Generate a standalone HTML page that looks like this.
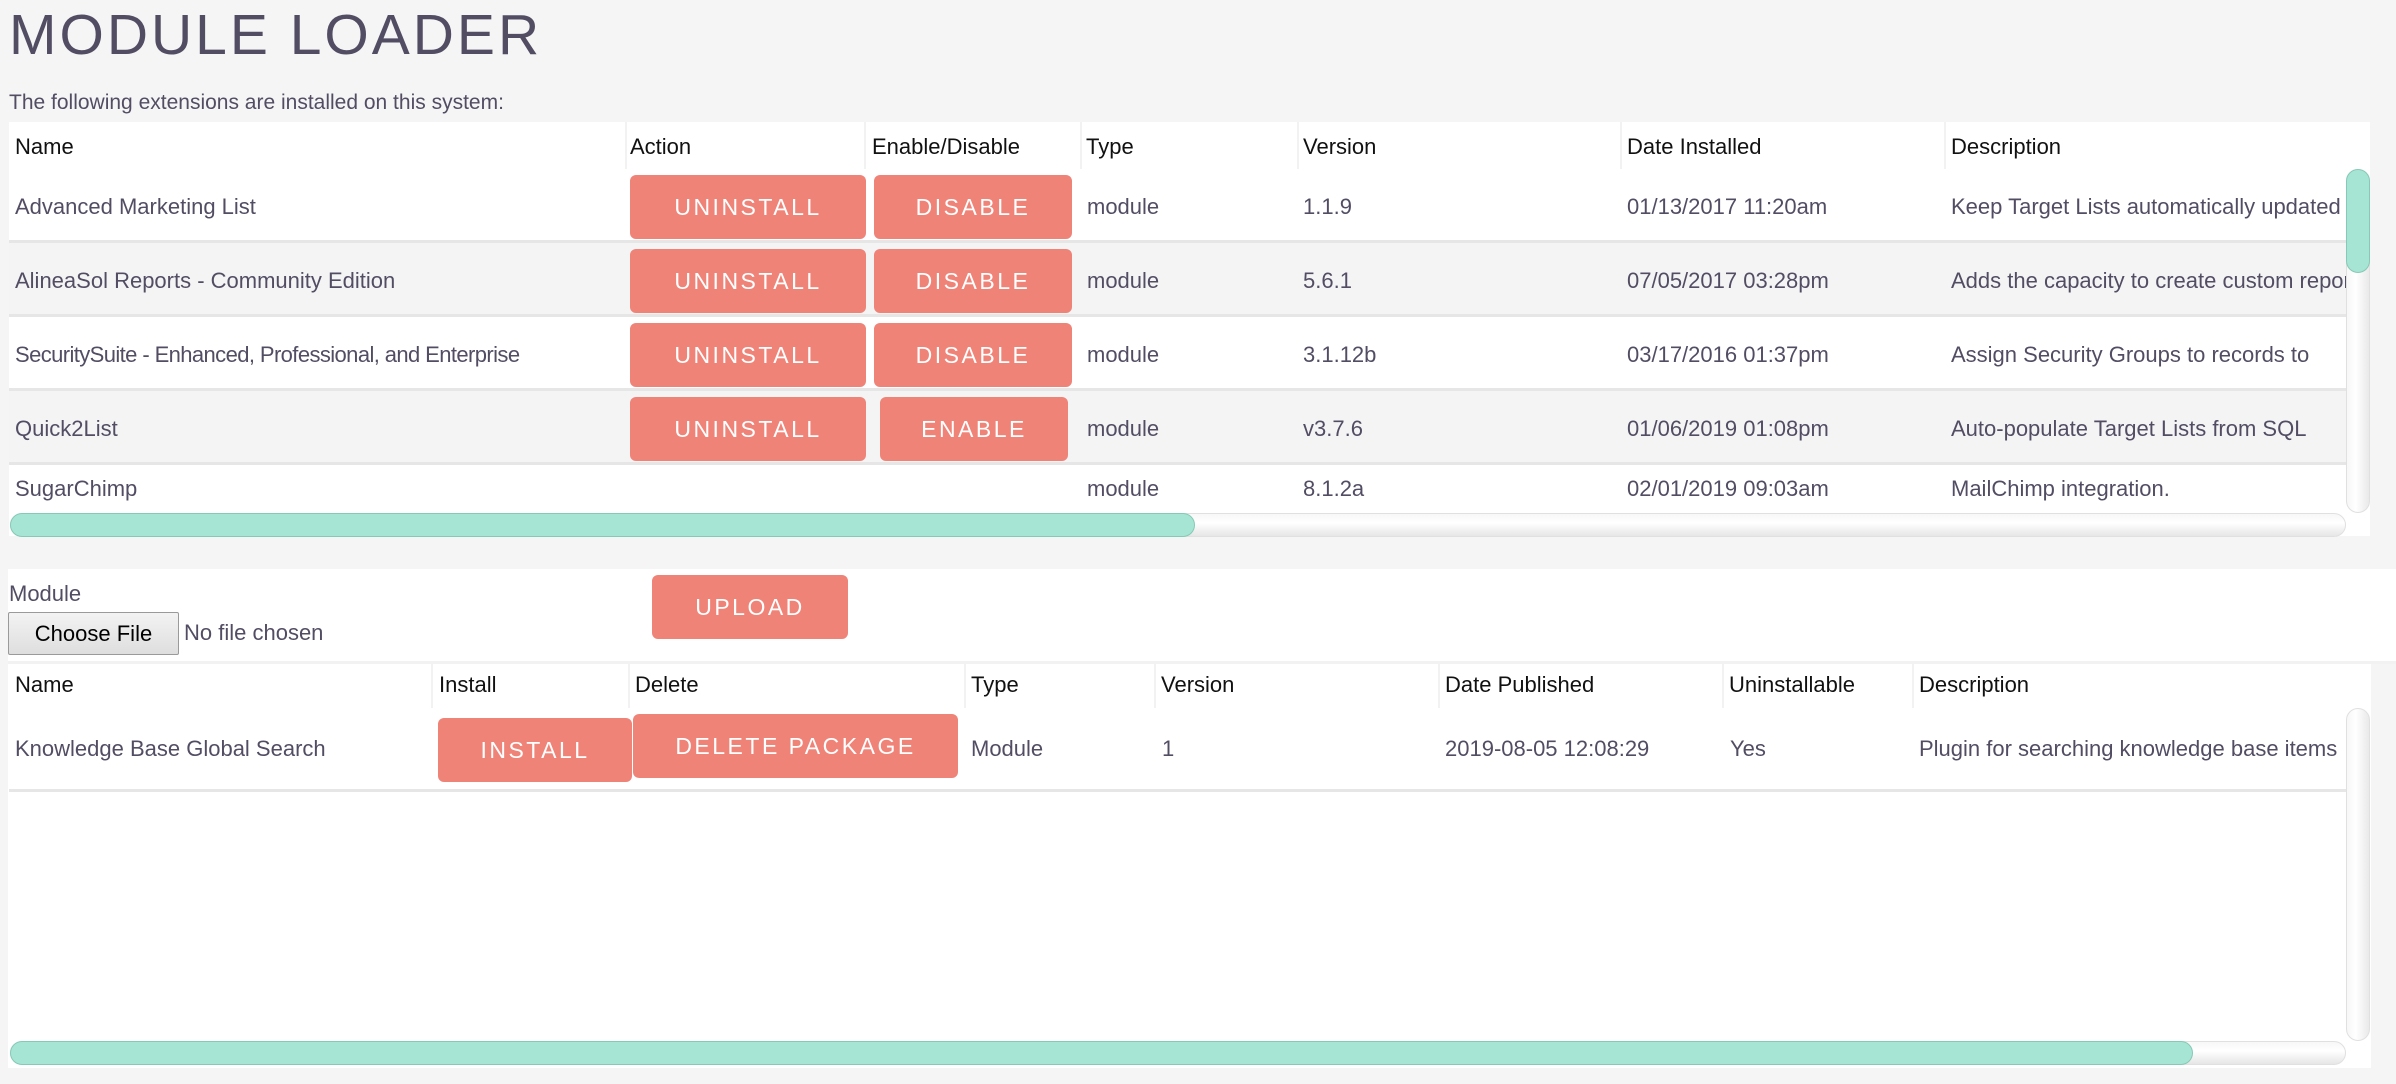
<!DOCTYPE html>
<html><head><meta charset="utf-8"><style>
*{box-sizing:border-box;margin:0;padding:0}
body{width:2396px;height:1084px;background:#f5f5f5;font-family:"Liberation Sans",sans-serif;color:#534d64;position:relative;overflow:hidden}
.a{position:absolute;white-space:nowrap}
.t{font-size:22px;line-height:22px}
.h{font-size:22px;line-height:22px;color:#111}
.btn{position:absolute;background:#f08377;color:#fff;border-radius:6px;font-size:23px;letter-spacing:2.5px;display:flex;align-items:center;justify-content:center}
.vd{position:absolute;width:2px;background:#f2f2f2}
.row{position:absolute;left:9px;width:2337px;height:74px;border-bottom:3px solid #e6e6e6}
.trackv{position:absolute;width:24px;border-radius:12px;background:linear-gradient(90deg,#f7f7f7,#fff 40%,#e9e9e9);border:1px solid #e0e0e0}
.trackh{position:absolute;height:24px;border-radius:12px;background:linear-gradient(180deg,#f7f7f7,#fff 40%,#e6e6e6);border:1px solid #e0e0e0}
.thumb{position:absolute;background:#a6e5d3;border:1px solid #86c9b6;border-radius:12px}
</style></head><body>
<div class="a" style="left:9px;top:2px;font-size:57px;line-height:66px;letter-spacing:3px;color:#534d64">MODULE LOADER</div>
<div class="a t" style="left:9px;top:92px;font-size:21px">The following extensions are installed on this system:</div>

<div class="a" style="left:9px;top:122px;width:2361px;height:414px;background:#fff"></div>
<div class="vd" style="left:625px;top:122px;height:49px"></div>
<div class="vd" style="left:864px;top:122px;height:49px"></div>
<div class="vd" style="left:1080px;top:122px;height:49px"></div>
<div class="vd" style="left:1297px;top:122px;height:49px"></div>
<div class="vd" style="left:1620px;top:122px;height:49px"></div>
<div class="vd" style="left:1944px;top:122px;height:49px"></div>
<div class="a h" style="left:15px;top:136px">Name</div>
<div class="a h" style="left:630px;top:136px">Action</div>
<div class="a h" style="left:872px;top:136px">Enable/Disable</div>
<div class="a h" style="left:1086px;top:136px">Type</div>
<div class="a h" style="left:1303px;top:136px">Version</div>
<div class="a h" style="left:1627px;top:136px">Date Installed</div>
<div class="a h" style="left:1951px;top:136px">Description</div>

<div class="row" style="top:169px;background:#fff"></div>
<div class="row" style="top:243px;background:#f4f4f5"></div>
<div class="row" style="top:317px;background:#fff"></div>
<div class="row" style="top:391px;background:#f4f4f5"></div>
<div class="a" style="left:9px;top:465px;width:2337px;height:48px;background:#fff"></div>

<div class="a t" style="left:15px;top:196px">Advanced Marketing List</div>
<div class="a t" style="left:15px;top:270px">AlineaSol Reports - Community Edition</div>
<div class="a t" style="left:15px;top:344px;letter-spacing:-0.6px">SecuritySuite - Enhanced, Professional, and Enterprise</div>
<div class="a t" style="left:15px;top:418px">Quick2List</div>
<div class="a t" style="left:15px;top:478px">SugarChimp</div>

<div class="btn" style="left:630px;top:175px;width:236px;height:64px">UNINSTALL</div>
<div class="btn" style="left:874px;top:175px;width:198px;height:64px">DISABLE</div>
<div class="btn" style="left:630px;top:249px;width:236px;height:64px">UNINSTALL</div>
<div class="btn" style="left:874px;top:249px;width:198px;height:64px">DISABLE</div>
<div class="btn" style="left:630px;top:323px;width:236px;height:64px">UNINSTALL</div>
<div class="btn" style="left:874px;top:323px;width:198px;height:64px">DISABLE</div>
<div class="btn" style="left:630px;top:397px;width:236px;height:64px">UNINSTALL</div>
<div class="btn" style="left:880px;top:397px;width:188px;height:64px">ENABLE</div>

<div class="a t" style="left:1087px;top:196px">module</div>
<div class="a t" style="left:1087px;top:270px">module</div>
<div class="a t" style="left:1087px;top:344px">module</div>
<div class="a t" style="left:1087px;top:418px">module</div>
<div class="a t" style="left:1087px;top:478px">module</div>
<div class="a t" style="left:1303px;top:196px">1.1.9</div>
<div class="a t" style="left:1303px;top:270px">5.6.1</div>
<div class="a t" style="left:1303px;top:344px">3.1.12b</div>
<div class="a t" style="left:1303px;top:418px">v3.7.6</div>
<div class="a t" style="left:1303px;top:478px">8.1.2a</div>
<div class="a t" style="left:1627px;top:196px">01/13/2017 11:20am</div>
<div class="a t" style="left:1627px;top:270px">07/05/2017 03:28pm</div>
<div class="a t" style="left:1627px;top:344px">03/17/2016 01:37pm</div>
<div class="a t" style="left:1627px;top:418px">01/06/2019 01:08pm</div>
<div class="a t" style="left:1627px;top:478px">02/01/2019 09:03am</div>
<div class="a" style="left:1951px;top:169px;width:395px;height:344px;overflow:hidden">
<div class="a t" style="left:0;top:27px">Keep Target Lists automatically updated</div>
<div class="a t" style="left:0;top:101px">Adds the capacity to create custom reports</div>
<div class="a t" style="left:0;top:175px">Assign Security Groups to records to</div>
<div class="a t" style="left:0;top:249px">Auto-populate Target Lists from SQL</div>
<div class="a t" style="left:0;top:309px">MailChimp integration.</div>
</div>
<div class="trackv" style="left:2346px;top:169px;height:344px"></div>
<div class="thumb" style="left:2346px;top:169px;width:24px;height:104px"></div>
<div class="trackh" style="left:10px;top:513px;width:2336px"></div>
<div class="thumb" style="left:10px;top:513px;width:1185px;height:24px"></div>

<div class="a" style="left:8px;top:569px;width:2388px;height:94px;background:#fff"></div>
<div class="a t" style="left:9px;top:583px">Module</div>
<div class="a" style="left:8px;top:612px;width:171px;height:43px;background:linear-gradient(#f3f3f3,#dedede);border:1px solid #9a9a9a;border-radius:2px;font-size:22px;color:#000;display:flex;align-items:center;justify-content:center">Choose File</div>
<div class="a t" style="left:184px;top:622px">No file chosen</div>
<div class="btn" style="left:652px;top:575px;width:196px;height:64px">UPLOAD</div>

<div class="a" style="left:8px;top:663px;width:2363px;height:405px;background:#fff"></div>
<div class="a" style="left:8px;top:661px;width:2388px;height:3px;background:#f2f2f2"></div>
<div class="vd" style="left:431px;top:663px;height:45px"></div>
<div class="vd" style="left:628px;top:663px;height:45px"></div>
<div class="vd" style="left:964px;top:663px;height:45px"></div>
<div class="vd" style="left:1154px;top:663px;height:45px"></div>
<div class="vd" style="left:1438px;top:663px;height:45px"></div>
<div class="vd" style="left:1722px;top:663px;height:45px"></div>
<div class="vd" style="left:1912px;top:663px;height:45px"></div>
<div class="a h" style="left:15px;top:674px">Name</div>
<div class="a h" style="left:439px;top:674px">Install</div>
<div class="a h" style="left:635px;top:674px">Delete</div>
<div class="a h" style="left:971px;top:674px">Type</div>
<div class="a h" style="left:1161px;top:674px">Version</div>
<div class="a h" style="left:1445px;top:674px">Date Published</div>
<div class="a h" style="left:1729px;top:674px">Uninstallable</div>
<div class="a h" style="left:1919px;top:674px">Description</div>
<div class="a" style="left:9px;top:789px;width:2337px;height:3px;background:#e6e6e6"></div>
<div class="a t" style="left:15px;top:738px">Knowledge Base Global Search</div>
<div class="btn" style="left:438px;top:718px;width:194px;height:64px">INSTALL</div>
<div class="btn" style="left:633px;top:714px;width:325px;height:64px">DELETE PACKAGE</div>
<div class="a t" style="left:971px;top:738px">Module</div>
<div class="a t" style="left:1162px;top:738px">1</div>
<div class="a t" style="left:1445px;top:738px">2019-08-05 12:08:29</div>
<div class="a t" style="left:1730px;top:738px">Yes</div>
<div class="a" style="left:1919px;top:730px;width:427px;height:40px;overflow:hidden"><div class="a t" style="left:0;top:8px">Plugin for searching knowledge base items</div></div>
<div class="trackv" style="left:2346px;top:708px;height:333px"></div>
<div class="trackh" style="left:10px;top:1041px;width:2336px"></div>
<div class="thumb" style="left:10px;top:1041px;width:2183px;height:24px"></div>
</body></html>
